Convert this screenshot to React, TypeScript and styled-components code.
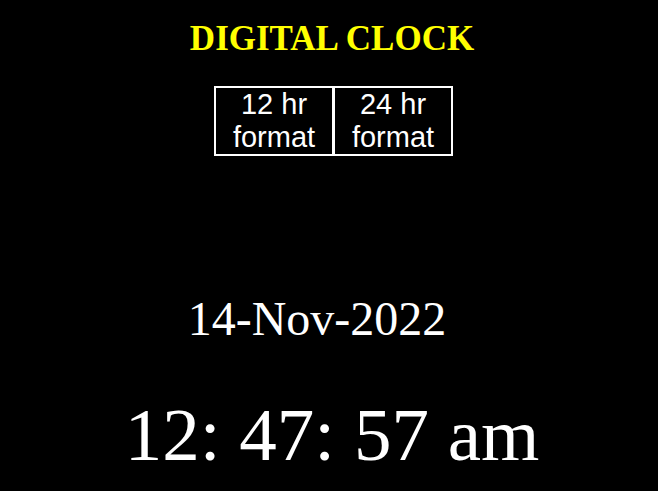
import React from "react";
import styled, { createGlobalStyle } from "styled-components";

const Global = createGlobalStyle`
  html, body { margin: 0; padding: 0; background: #000; }
  body { width: 658px; height: 491px; overflow: hidden; }
`;

const Page = styled.div`
  display: flex;
  flex-direction: column;
  align-items: center;
  padding-left: 6px;
  background: #000;
  height: 491px;
  box-sizing: border-box;
`;

const Title = styled.h1`
  margin: 19px 0 0;
  font-family: "Liberation Serif", serif;
  font-weight: bold;
  font-size: 35px;
  line-height: 40px;
  color: #ffff00;
`;

const Toggle = styled.div`
  display: flex;
  margin-top: 27px;
  margin-left: 2px;
`;

const FormatButton = styled.button`
  width: 120px;
  box-sizing: border-box;
  background: #000;
  color: #fff;
  border: 2px solid #fff;
  font-family: "Liberation Sans", Arial, sans-serif;
  font-size: 29px;
  line-height: 33px;
  padding: 0 4px;
  margin: 0 -1px 0 0;
  cursor: pointer;
`;

const DateText = styled.div`
  margin-top: 135px;
  margin-right: 30px;
  font-family: "Liberation Serif", serif;
  font-size: 48px;
  color: #fff;
`;

const TimeText = styled.div`
  margin-top: 46px;
  font-family: "Liberation Serif", serif;
  font-size: 75px;
  color: #fff;
`;

export default function App() {
  return (
    <>
      <Global />
      <Page>
        <Title>DIGITAL CLOCK</Title>
        <Toggle>
          <FormatButton>12 hr format</FormatButton>
          <FormatButton>24 hr format</FormatButton>
        </Toggle>
        <DateText>14-Nov-2022</DateText>
        <TimeText>12: 47: 57 am</TimeText>
      </Page>
    </>
  );
}
